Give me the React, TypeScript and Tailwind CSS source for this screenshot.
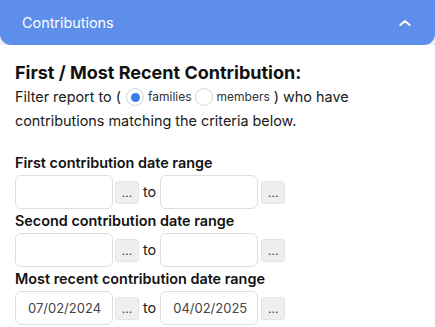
import React from "react";

function DateRow({ from = "", to = "" }: { from?: string; to?: string }) {
  return (
    <div className="flex items-center h-[34px]">
      <input
        readOnly
        value={from}
        className="w-[98px] h-[34px] rounded-[6px] border border-[#dedede] bg-white pl-[12px] pr-[2px] text-[13px] text-[#444] outline-none"
      />
      <button className="ml-[2px] w-[24px] h-[23px] rounded-[3px] border border-[#e4e4e4] bg-[#efefef] text-[12px] leading-none text-[#333] flex items-center justify-center pt-[2px]">
        ...
      </button>
      <span className="mx-[4px] text-[14.4px] text-[#1a1a1a]">to</span>
      <input
        readOnly
        value={to}
        className="w-[98px] h-[34px] rounded-[6px] border border-[#dedede] bg-white pl-[12px] pr-[2px] text-[13px] text-[#444] outline-none"
      />
      <button className="ml-[3px] w-[24px] h-[23px] rounded-[3px] border border-[#e4e4e4] bg-[#efefef] text-[12px] leading-none text-[#333] flex items-center justify-center pt-[2px]">
        ...
      </button>
    </div>
  );
}

export default function App() {
  return (
    <div
      className="w-[435px] h-[327px] bg-white overflow-hidden"
      style={{ fontFamily: "Inter, 'Noto Sans', sans-serif" }}
    >
      <div className="bg-[#efeff1]">
        <div className="h-[45px] bg-[#5c8eea] rounded-b-[11px] flex items-center justify-between pl-[22px] pr-[22px]">
          <span className="text-white text-[14.4px]">Contributions</span>
          <svg width="16" height="16" viewBox="0 0 24 24" fill="none" stroke="white" strokeWidth="3" strokeLinecap="round" strokeLinejoin="round">
            <path d="M5 15l7-6 7 6" />
          </svg>
        </div>
      </div>
      <div className="px-[15px] pt-[16px]">
        <div className="text-[18px] font-bold text-[#111] leading-[24px]">First / Most Recent Contribution:</div>
        <div className="text-[14.4px] text-[#1a1a1a] leading-[24px]">
          <div className="flex items-center">
            <span>Filter report to (</span>
            <span className="ml-[5px] w-[18px] h-[18px] rounded-full border border-[#cfd8e6] flex items-center justify-center">
              <span className="w-[9px] h-[9px] rounded-full bg-[#3b7de8]" />
            </span>
            <span className="ml-[4px] text-[12px] text-[#333]">families</span>
            <span className="ml-[3px] w-[18px] h-[18px] rounded-full border border-[#d6d6d6]" />
            <span className="ml-[4px] text-[12px] text-[#333]">members</span>
            <span className="ml-[4px]">) who have</span>
          </div>
          <div>contributions matching the criteria below.</div>
        </div>
        <div className="mt-[19px] text-[14.4px] font-semibold text-[#111] leading-[21px]">First contribution date range</div>
        <div className="mt-[2px]">
          <DateRow />
        </div>
        <div className="mt-[1px] text-[14.4px] font-semibold text-[#111] leading-[21px]">Second contribution date range</div>
        <div className="mt-[2px]">
          <DateRow />
        </div>
        <div className="mt-[1px] text-[14.4px] font-semibold text-[#111] leading-[21px]">Most recent contribution date range</div>
        <div className="mt-[2px]">
          <DateRow from="07/02/2024" to="04/02/2025" />
        </div>
      </div>
    </div>
  );
}
